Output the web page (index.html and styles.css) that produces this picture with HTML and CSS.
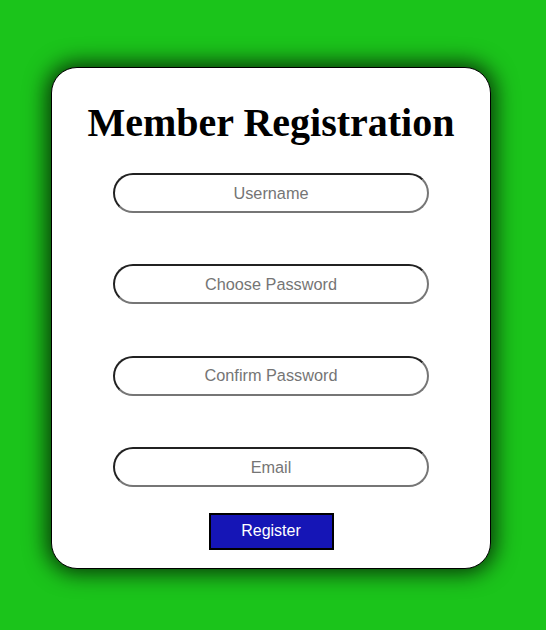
FILE: index.html
```html
<!DOCTYPE html>
<html>
<head>
<meta charset="utf-8">
<link rel="stylesheet" href="styles.css">
</head>
<body>
<div class="card">
  <h1 class="title">Member Registration</h1>
  <form class="form">
    <input class="field" type="text" placeholder="Username">
    <input class="field" type="password" placeholder="Choose Password">
    <input class="field" type="password" placeholder="Confirm Password">
    <input class="field" type="email" placeholder="Email">
    <button class="btn" type="button">Register</button>
  </form>
</div>
</body>
</html>
```
FILE: styles.css
```css
html, body {
  margin: 0;
  padding: 0;
}
body {
  background: #1bc41b;
  height: 630px;
  overflow: hidden;
  font-family: "Liberation Sans", Arial, sans-serif;
}
.card {
  box-sizing: border-box;
  width: 440px;
  height: 502px;
  margin: 67px 0 0 51px;
  background: #fff;
  border: 1px solid #000;
  border-radius: 26px;
  box-shadow: 0 0 22px 4px rgba(0, 0, 0, 0.75);
  padding-top: 30px;
  display: flex;
  flex-direction: column;
  align-items: center;
}
.title {
  margin: 0;
  font-family: "Liberation Serif", "Times New Roman", serif;
  font-weight: bold;
  font-size: 40px;
  line-height: 50px;
  color: #000;
}
.form {
  margin-top: 25px;
  display: flex;
  flex-direction: column;
  align-items: center;
}
.field {
  box-sizing: border-box;
  width: 316px;
  height: 40px;
  margin-bottom: 51.4px;
  border: 2px inset #767676;
  border-radius: 20px;
  text-align: center;
  font-family: "Liberation Sans", Arial, sans-serif;
  font-size: 16.3px;
  outline: none;
  background: #fff;
}
.field:nth-of-type(4) {
  margin-bottom: 26px;
}
.field::placeholder {
  color: #757575;
}
.btn {
  box-sizing: border-box;
  width: 125px;
  height: 37px;
  background: #1515b6;
  color: #fff;
  border: 2px solid #000;
  font-family: "Liberation Sans", Arial, sans-serif;
  font-size: 16px;
  padding: 0 0 1px;
}
```
